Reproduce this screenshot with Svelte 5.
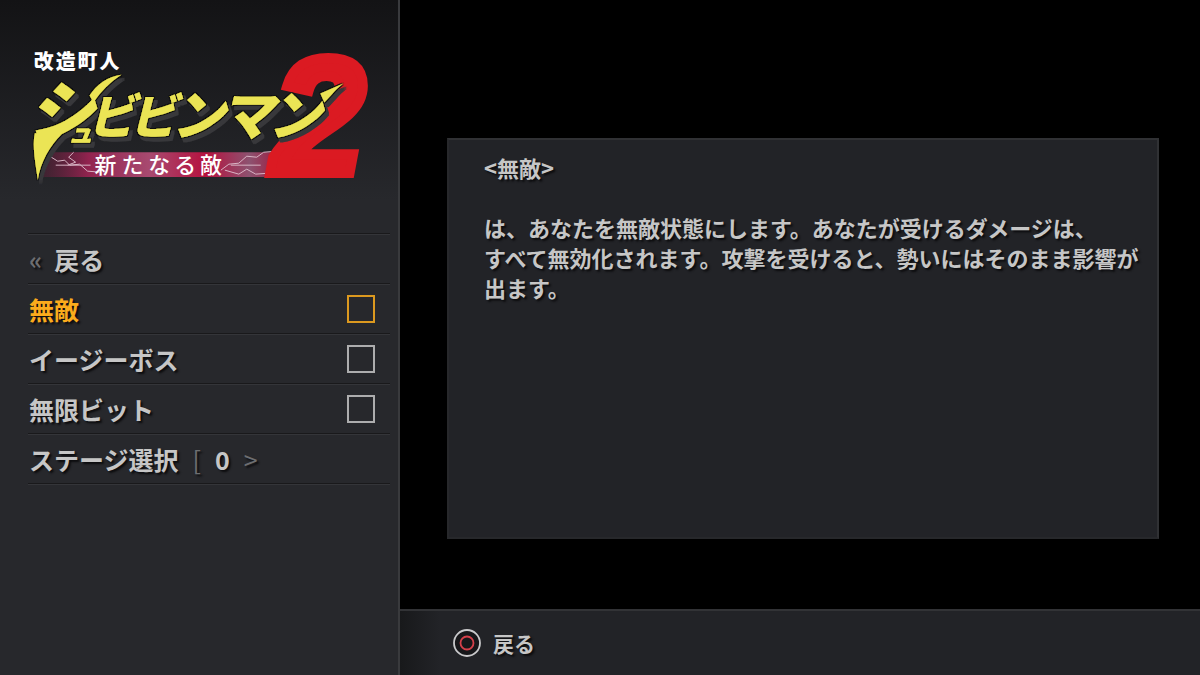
<script>
	let selected = $state('invincible')
	let stage = $state(0)
	let cheats = $state([
		{ id: 'invincible', label: '無敵', on: false },
		{ id: 'easyboss', label: 'イージーボス', on: false },
		{ id: 'bits', label: '無限ビット', on: false },
	])
</script>

<div class="screen">
	<aside>
		<svg class="logo" viewBox="0 0 400 200" role="img" aria-label="改造町人シュビビンマン2 新たなる敵">
			<defs>
				<linearGradient id="banner" x1="0" x2="1">
					<stop offset="0" stop-color="#5d2039" stop-opacity="0.4" />
					<stop offset="0.2" stop-color="#92234f" />
					<stop offset="0.45" stop-color="#a84a70" />
					<stop offset="0.68" stop-color="#b5123f" />
					<stop offset="0.86" stop-color="#8d5270" />
					<stop offset="1" stop-color="#a01237" />
				</linearGradient>
				<!-- black rim plus a solid grey edge below right -->
				<filter id="rim" x="-10%" y="-10%" width="120%" height="120%">
					<feMorphology in="SourceAlpha" operator="dilate" radius="1" result="fat" />
					<feFlood flood-color="#0b0b0b" />
					<feComposite in2="fat" operator="in" result="black" />
					<feOffset in="fat" dx="3" dy="4" result="moved" />
					<feFlood flood-color="#37373a" />
					<feComposite in2="moved" operator="in" result="grey" />
					<feMerge>
						<feMergeNode in="grey" />
						<feMergeNode in="black" />
						<feMergeNode in="SourceGraphic" />
					</feMerge>
				</filter>
			</defs>
			<path d="M46 153H285L272 178H40Z" fill="url(#banner)" />
			<g class="bolt">
				<path d="M50 157l8 5 7-1 5 5 10-1 8 7 12 1 M74 153l-5 5 7 5-8 3" />
				<path d="M222 171l8-6 10-1 8-7 10 1 7-5 12-1 M226 171l14 4 8-5 9 5 14-1" />
				<path d="M56 166H91 M232 166H262" />
			</g>
			<text class="sub" x="95 122 149 175 201" y="174">新たなる敵</text>
			<text class="two" x="274" y="174">2</text>
			<g class="title" filter="url(#rim)">
				<path d="M35 134C32 147 36 166 38 181C41 162 50 147 62 135L45 134Z" />
				<path d="M90 96C97 85 108 77 122 75C110 83 102 91 94 103Z" />
				<path d="M322 94L345 84C338 89 334 95 326 103Z" />
				<text y="138"><tspan class="big" x="27" y="138">シ</tspan><tspan class="small" x="68" y="143">ュ</tspan><tspan class="mid" x="88 130" y="135">ビビ</tspan><tspan class="end" x="172 221 269" y="136">ンマン</tspan></text>
			</g>
			<text class="top" x="34 56 78 100" y="69">改造町人</text>
		</svg>

		<ul>
			<li>
				<button class="back"><span class="dim">«</span>戻る</button>
			</li>
			{#each cheats as cheat}
				<li>
					<label class:active={selected === cheat.id}>
						{cheat.label}
						<input type="checkbox" bind:checked={cheat.on} onfocus={() => selected = cheat.id} />
					</label>
				</li>
			{/each}
			<li class="stage">
				ステージ選択
				<button class="step" aria-label="前のステージ" onclick={() => stage = Math.max(0, stage - 1)}>[</button>
				<output>{stage}</output>
				<button class="step" aria-label="次のステージ" onclick={() => stage++}>&gt;</button>
			</li>
		</ul>
	</aside>

	<main>
		<div class="stagearea">
			<section>
				<h1>&lt;無敵&gt;</h1>
				<p>
					は、あなたを無敵状態にします。あなたが受けるダメージは、<br />
					すべて無効化されます。攻撃を受けると、勢いにはそのまま影響が<br />
					出ます。
				</p>
			</section>
		</div>
		<footer>
			<button class="hint">
				<svg viewBox="0 0 30 30" width="30" height="30" aria-hidden="true">
					<circle cx="15" cy="15" r="13" fill="#17171a" stroke="#c9c9cb" stroke-width="1.8" />
					<circle cx="15" cy="15" r="6.5" fill="none" stroke="#d5404a" stroke-width="1.8" />
				</svg>
				戻る
			</button>
		</footer>
	</main>
</div>

<style>
	:global(body) {
		margin: 0;
		background: #000;
	}

	.screen {
		display: grid;
		grid-template-columns: 1fr 2fr;
		min-height: 100vh;
		color: #c6c6c6;
		font-family: "Noto Sans CJK JP", sans-serif;
		font-weight: bold;
		text-shadow: 2px 2px 2px #0c0c0e;
	}

	aside {
		box-sizing: border-box;
		border-right: 2px solid #393a3d;
		background: linear-gradient(#131315 0, #27282c 200px);
	}

	.logo {
		display: block;
		width: 100%;
		text-shadow: none;
	}
	.logo text {
		font-family: "Noto Sans CJK JP", sans-serif;
		font-weight: 900;
	}
	.logo .top {
		font-size: 20px;
		fill: #fff;
	}
	.logo .sub {
		font-size: 22px;
		font-weight: 500;
		fill: #fff;
	}
	.logo .two {
		font-family: "Liberation Sans", sans-serif;
		font-size: 166px;
		font-style: italic;
		fill: #db1a22;
		stroke: #db1a22;
		stroke-width: 10;
	}
	.title {
		fill: #ebe455;
	}
	.title text {
		font-style: italic;
	}
	.title .big {
		font-size: 68px;
	}
	.title .mid {
		font-size: 48px;
	}
	.title .end {
		font-size: 54px;
	}
	.title .small {
		font-size: 26px;
	}
	.bolt {
		fill: none;
		stroke: #d9b4c5;
		stroke-width: 1;
	}

	ul {
		list-style: none;
		margin: 34px 8px 0 28px;
		padding: 0;
		border-bottom: 1px solid #19191b;
		box-shadow: 0 1px #343539;
		font-size: 25px;
		line-height: 48px;
	}
	li {
		border-top: 1px solid #19191b;
		box-shadow: inset 0 1px #343539;
		padding: 1px 15px 0 1px;
	}
	label {
		display: flex;
		justify-content: space-between;
		align-items: center;
	}
	.active {
		color: #fbab1c;
	}
	input {
		appearance: none;
		box-sizing: border-box;
		width: 28px;
		height: 28px;
		margin: 0;
		border: 2px solid #adadae;
		outline: none;
	}
	.active input {
		border-color: #dc991f;
	}
	input:checked {
		background: currentColor;
		box-shadow: inset 0 0 0 4px #27282c;
	}

	button {
		padding: 0;
		border: 0;
		background: none;
		color: inherit;
		font: inherit;
		text-shadow: inherit;
		cursor: pointer;
	}
	.back {
		display: flex;
		gap: 12px;
	}
	.dim, .step {
		color: #6d6e71;
	}
	.step {
		font-weight: normal;
	}
	.stage {
		display: flex;
		gap: 14px;
	}

	main {
		display: flex;
		flex-direction: column;
		background: #000;
	}
	.stagearea {
		flex: 1;
		display: flex;
		padding: 138px 41px 70px 47px;
	}
	section {
		flex: 1;
		box-sizing: border-box;
		padding: 12px 0 16px 35px;
		border: 2px solid #303134;
		border-left-color: #27282b;
		border-bottom-color: #27282b;
		background: #222327;
		font-size: 22px;
		line-height: 30px;
		white-space: nowrap;
	}
	h1 {
		margin: 0 0 30px;
		font-size: 22px;
	}
	p {
		margin: 0;
	}

	footer {
		border-top: 2px solid #323336;
		padding: 16px 52px;
		background: linear-gradient(90deg, #18191b, #222327 40px);
		font-size: 21px;
		line-height: 32px;
	}
	.hint {
		display: flex;
		align-items: center;
		gap: 11px;
	}
</style>
